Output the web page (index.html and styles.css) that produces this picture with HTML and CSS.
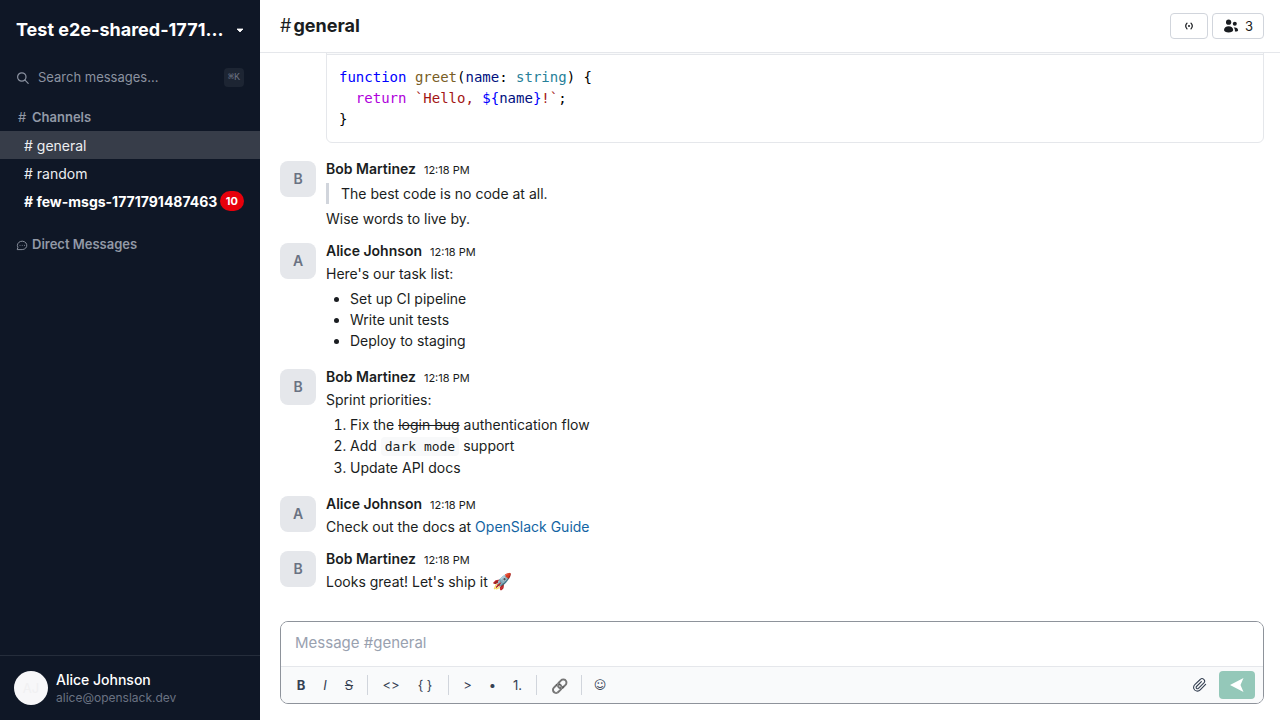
FILE: index.html
```html
<!DOCTYPE html>
<html lang="en">
  <head>
    <meta charset="UTF-8" />
    <meta name="viewport" content="width=device-width, initial-scale=1.0" />
    <title>OpenSlack</title>
    <link rel="stylesheet" href="styles.css">
  </head>
  <body>
    <div class="app">
      <aside class="sidebar">
        <button class="workspace">
          <span class="workspace-name">Test e2e-shared-1771791487463</span>
          <svg class="caret" viewBox="0 0 8 5" width="8" height="5"><path d="M1 1h6L4 4z" fill="currentColor" stroke="currentColor" stroke-width="0.8" stroke-linejoin="round" /></svg>
        </button>

        <button class="search">
          <svg viewBox="0 0 14 14" width="14" height="14" fill="none" stroke="currentColor" stroke-width="1.2" stroke-linecap="round">
            <circle cx="5.8" cy="6" r="4.2" />
            <path d="M9 9.200l3.200 3.200" />
          </svg>
          <span>Search messages...</span>
          <kbd>⌘K</kbd>
        </button>

        <nav class="channels">
          <h2 class="section-title"><span class="section-icon">#</span>Channels</h2>
          <a class="channel active" href="#general"># general</a>
          <a class="channel" href="#random"># random</a>
          <a class="channel unread" href="#few-msgs"># few-msgs-1771791487463<span class="badge">10</span></a>

          <h2 class="section-title dm">
            <span class="section-icon">
              <svg viewBox="0 0 12 12" width="12" height="12" fill="none" stroke="currentColor" stroke-width="0.9" stroke-linejoin="round">
                <path d="M1.200 10.600l.7-2.300A4.700 4.200 0 1 1 6.200 10.600z" />
                <path d="M3.600 6.400h.8M5.800 6.400h.8M8 6.400h.8" />
              </svg>
            </span>Direct Messages
          </h2>
        </nav>

        <div class="user">
          <div class="user-avatar">AJ</div>
          <div>
            <div class="user-name">Alice Johnson</div>
            <div class="user-email">alice@openslack.dev</div>
          </div>
        </div>
      </aside>

      <main class="main">
        <header class="header">
          <h1><span class="hash">#</span>general</h1>
          <div class="header-actions">
            <button class="header-btn" aria-label="Huddle">
              <svg viewBox="0 0 10 8" width="10" height="8" fill="none" stroke="currentColor" stroke-width="1.2" stroke-linecap="round">
                <path d="M3 1.200Q.4 4 3 6.800M7 1.200Q9.600 4 7 6.800" />
                <circle cx="5" cy="4" r="0.4" fill="currentColor" />
              </svg>
            </button>
            <button class="header-btn" aria-label="Members">
              <svg viewBox="0 0 16 14" width="16" height="14" fill="currentColor">
                <circle cx="5.6" cy="3.2" r="2.600" />
                <path d="M1 11C1 8.600 3 7.200 5.600 7.200s4.600 1.400 4.600 3.800c0 1.600-2 2.400-4.600 2.400S1 12.600 1 11z" />
                <circle cx="11.800" cy="4.800" r="2" />
                <path d="M10.600 8.600c2.600-.6 4.500.6 4.500 2.600 0 1-1.100 1.400-3.200 1.300.2-1.800-.2-2.900-1.300-3.900z" />
              </svg>
              <span>3</span>
            </button>
          </div>
        </header>

        <section class="messages">
          <article class="message continued">
            <div class="body">
              <div class="code-block">
                <div class="code-head"></div>
                <pre><span class="kw">function</span> <span class="fn">greet</span>(<span class="var">name</span>: <span class="type">string</span>) {
  <span class="ctl">return</span> <span class="str">`Hello, </span><span class="kw">${</span><span class="var">name</span><span class="kw">}</span><span class="str">!`</span>;
}</pre>
              </div>
            </div>
          </article>

          <article class="message">
            <div class="avatar">B</div>
            <div class="body">
              <div class="meta"><span class="author">Bob Martinez</span><time>12:18 PM</time></div>
              <blockquote>The best code is no code at all.</blockquote>
              <p>Wise words to live by.</p>
            </div>
          </article>

          <article class="message">
            <div class="avatar">A</div>
            <div class="body">
              <div class="meta"><span class="author">Alice Johnson</span><time>12:18 PM</time></div>
              <p>Here's our task list:</p>
              <ul>
                <li>Set up CI pipeline</li>
                <li>Write unit tests</li>
                <li>Deploy to staging</li>
              </ul>
            </div>
          </article>

          <article class="message">
            <div class="avatar">B</div>
            <div class="body">
              <div class="meta"><span class="author">Bob Martinez</span><time>12:18 PM</time></div>
              <p>Sprint priorities:</p>
              <ol>
                <li>Fix the <s>login bug</s> authentication flow</li>
                <li>Add <code>dark mode</code> support</li>
                <li>Update API docs</li>
              </ol>
            </div>
          </article>

          <article class="message">
            <div class="avatar">A</div>
            <div class="body">
              <div class="meta"><span class="author">Alice Johnson</span><time>12:18 PM</time></div>
              <p>Check out the docs at <a href="#guide">OpenSlack Guide</a></p>
            </div>
          </article>

          <article class="message">
            <div class="avatar">B</div>
            <div class="body">
              <div class="meta"><span class="author">Bob Martinez</span><time>12:18 PM</time></div>
              <p>Looks great! Let's ship it <span class="emoji">🚀</span></p>
            </div>
          </article>
        </section>

        <form class="composer">
          <input class="composer-input" type="text" placeholder="Message #general" aria-label="Message #general" />
          <div class="toolbar">
            <button type="button" class="tool"><b>B</b></button>
            <button type="button" class="tool"><i>I</i></button>
            <button type="button" class="tool"><s>S</s></button>
            <span class="divider"></span>
            <button type="button" class="tool wide">&lt;&gt;</button>
            <button type="button" class="tool wide">{ }</button>
            <span class="divider"></span>
            <button type="button" class="tool block">&gt;</button>
            <button type="button" class="tool block">•</button>
            <button type="button" class="tool block">1.</button>
            <span class="divider"></span>
            <button type="button" class="tool link">🔗</button>
            <span class="divider"></span>
            <button type="button" class="tool smile">☺</button>
            <button type="button" class="tool attach" aria-label="Attach file">
              <svg viewBox="0 0 16 16" width="16" height="16" fill="none" stroke="currentColor" stroke-width="1.1" stroke-linecap="round" stroke-linejoin="round">
                <path d="M14.600 7.400l-5.400 5.400a3.800 3.800 0 0 1-6.400-1.200 3.800 3.800 0 0 1 1-3.900l5.400-5.200a2.500 2.500 0 0 1 3.700 3.400l-5.500 5.400a1.300 1.300 0 0 1-1.900-1.800l4.900-4.900" />
              </svg>
            </button>
            <button type="submit" class="send" aria-label="Send">
              <svg viewBox="0 0 14 14" width="14" height="14" fill="currentColor"><path d="M0 7L13.500 0 10.500 7l3 7z" /></svg>
            </button>
          </div>
        </form>
      </main>
    </div>
  </body>
</html>
```
FILE: styles.css
```css
:root {
  --navy: #0f1726;
  --text: #1a1d21;
  --muted: #8b92a0;
  --border: #e5e7eb;
}

* {
  box-sizing: border-box;
}

body {
  margin: 0;
  font-family: Inter, 'Liberation Sans', sans-serif;
  font-size: 14px;
  line-height: 21px;
  color: var(--text);
  background-color: white;
}

button {
  font: inherit;
  color: inherit;
  background: none;
  border: none;
  padding: 0;
  cursor: pointer;
}

a {
  text-decoration: none;
}

.app {
  display: flex;
  height: 100vh;
}

/* sidebar */
.sidebar {
  width: 260px;
  flex-shrink: 0;
  display: flex;
  flex-direction: column;
  background-color: var(--navy);
  color: white;
}

.workspace {
  display: flex;
  align-items: center;
  gap: 12px;
  padding: 16px 16px 14px;
  font-size: 18px;
  line-height: 28px;
  font-weight: 700;
  text-align: left;
}

.workspace-name {
  flex: 1;
  overflow: hidden;
  white-space: nowrap;
  text-overflow: ellipsis;
}

.search {
  display: flex;
  align-items: center;
  gap: 8px;
  margin: 4px 0 14px;
  padding: 5px 16px;
  font-size: 13px;
  color: var(--muted);
}

.search kbd {
  margin-left: auto;
  padding: 0 4px;
  border-radius: 4px;
  font-family: 'Liberation Mono', monospace;
  font-size: 10px;
  line-height: 19px;
  color: #697080;
  background-color: #1d2533;
}

.channels {
  flex: 1;
}

.section-title {
  display: flex;
  align-items: center;
  gap: 4px;
  margin: 0;
  padding: 0 16px 3px;
  font-size: 13px;
  line-height: 21px;
  font-weight: 600;
  color: #9299a6;
}

.section-title.dm {
  margin-top: 19px;
}

.section-icon {
  display: flex;
  justify-content: center;
  width: 12px;
  font-weight: 400;
}

.channel {
  display: flex;
  align-items: center;
  justify-content: space-between;
  height: 28px;
  padding: 0 16px 0 24px;
  color: #eceef1;
}

.channel.active {
  background-color: #373d49;
}

.channel.unread {
  color: white;
  font-weight: 700;
}

.badge {
  padding: 0 6px;
  border-radius: 10px;
  font-size: 11px;
  line-height: 20px;
  background-color: #e7000b;
}

.user {
  display: flex;
  align-items: center;
  gap: 8px;
  padding: 14px;
  border-top: 1px solid #252d3b;
}

.user-avatar {
  width: 34px;
  height: 34px;
  border-radius: 50%;
  font-size: 13px;
  line-height: 34px;
  text-align: center;
  color: #f0f0f2;
  background-color: #f7f7f9;
}

.user-name {
  line-height: 20px;
  font-weight: 500;
}

.user-email {
  font-size: 12px;
  line-height: 16px;
  color: #6a7282;
}

/* channel */
.main {
  flex: 1;
  min-width: 0;
  display: flex;
  flex-direction: column;
}

.header {
  display: flex;
  align-items: center;
  justify-content: space-between;
  height: 53px;
  flex-shrink: 0;
  padding: 0 16px 0 20px;
  border-bottom: 1px solid var(--border);
}

.header h1 {
  display: flex;
  gap: 2px;
  margin: 0;
  font-size: 18px;
  line-height: 28px;
  font-weight: 700;
}

.hash {
  font-weight: 400;
}

.header-actions {
  display: flex;
  gap: 4px;
}

.header-btn {
  display: flex;
  align-items: center;
  justify-content: center;
  gap: 6px;
  min-width: 38px;
  height: 26px;
  padding: 0 10px;
  border: 1px solid #d1d5dc;
  border-radius: 4px;
  font-size: 13px;
}

.messages {
  flex: 1;
  min-height: 0;
  display: flex;
  flex-direction: column;
  justify-content: flex-end;
  overflow: hidden;
  padding: 0 16px 7px 20px;
}

.message {
  display: flex;
  gap: 10px;
  padding: 6px 0;
}

.message.continued {
  padding-left: 46px;
}

.avatar {
  width: 36px;
  height: 36px;
  flex-shrink: 0;
  margin-top: 2px;
  border-radius: 8px;
  line-height: 36px;
  text-align: center;
  font-weight: 600;
  color: #6a7282;
  background-color: var(--border);
}

.body {
  flex: 1;
  min-width: 0;
}

.meta {
  display: flex;
  align-items: baseline;
  gap: 8px;
  margin-bottom: 1px;
  line-height: 20px;
}

.author {
  font-weight: 600;
}

time {
  font-size: 11px;
}

p {
  margin: 0;
}

blockquote {
  margin: 3px 0 4px;
  padding-left: 12px;
  border-left: 3px solid #d1d5dc;
}

ul,
ol {
  margin: 4px 0;
  padding-left: 24px;
}

code {
  padding: 2px 4px;
  border-radius: 4px;
  font-family: 'DejaVu Sans Mono', monospace;
  font-size: 13px;
  background-color: #f8f9fa;
}

.message a {
  color: #1264a3;
}

.emoji {
  font-size: 16px;
  line-height: 1;
}

.code-block {
  margin: 4px 0;
  border: 1px solid var(--border);
  border-radius: 6px;
}

.code-head {
  height: 28px;
  border-bottom: 1px solid var(--border);
  background-color: #f9fafb;
}

.code-block pre {
  margin: 0;
  padding: 12px;
  font-family: 'DejaVu Sans Mono', monospace;
  color: black;
}

.kw {
  color: #0000ff;
}

.fn {
  color: #795e26;
}

.var {
  color: #001080;
}

.type {
  color: #267f99;
}

.ctl {
  color: #af00db;
}

.str {
  color: #a31515;
}

/* composer */
.composer {
  margin: 16px 16px 16px 20px;
  border: 1px solid #8e939b;
  border-radius: 8px;
  overflow: hidden;
}

.composer-input {
  display: block;
  width: 100%;
  height: 44px;
  padding: 0 14px 4px;
  border: none;
  outline: none;
  font-family: inherit;
  font-size: 15px;
}

.composer-input::placeholder {
  color: #99a1af;
}

.toolbar {
  display: flex;
  align-items: center;
  height: 37px;
  padding: 0 8px;
  border-top: 1px solid var(--border);
  background-color: #f9fafb;
  color: #364153;
}

.tool {
  width: 24px;
  height: 28px;
  font-size: 13px;
}

.tool.block {
  width: 25px;
}

.tool.wide {
  width: 34px;
}

.tool.link {
  width: 32px;
  font-size: 14px;
  filter: grayscale(1) brightness(0.7);
}

.tool.smile {
  font-family: 'DejaVu Sans', sans-serif;
  font-size: 12px;
}

.divider {
  width: 1px;
  height: 20px;
  margin: 0 6px;
  background-color: #d1d5dc;
}

.tool.attach {
  margin-left: auto;
}

.attach svg {
  display: block;
  margin: auto;
}

.send {
  display: flex;
  align-items: center;
  justify-content: center;
  width: 36px;
  height: 28px;
  margin-left: 8px;
  border-radius: 4px;
  color: white;
  background-color: #94c8b9;
}
```
